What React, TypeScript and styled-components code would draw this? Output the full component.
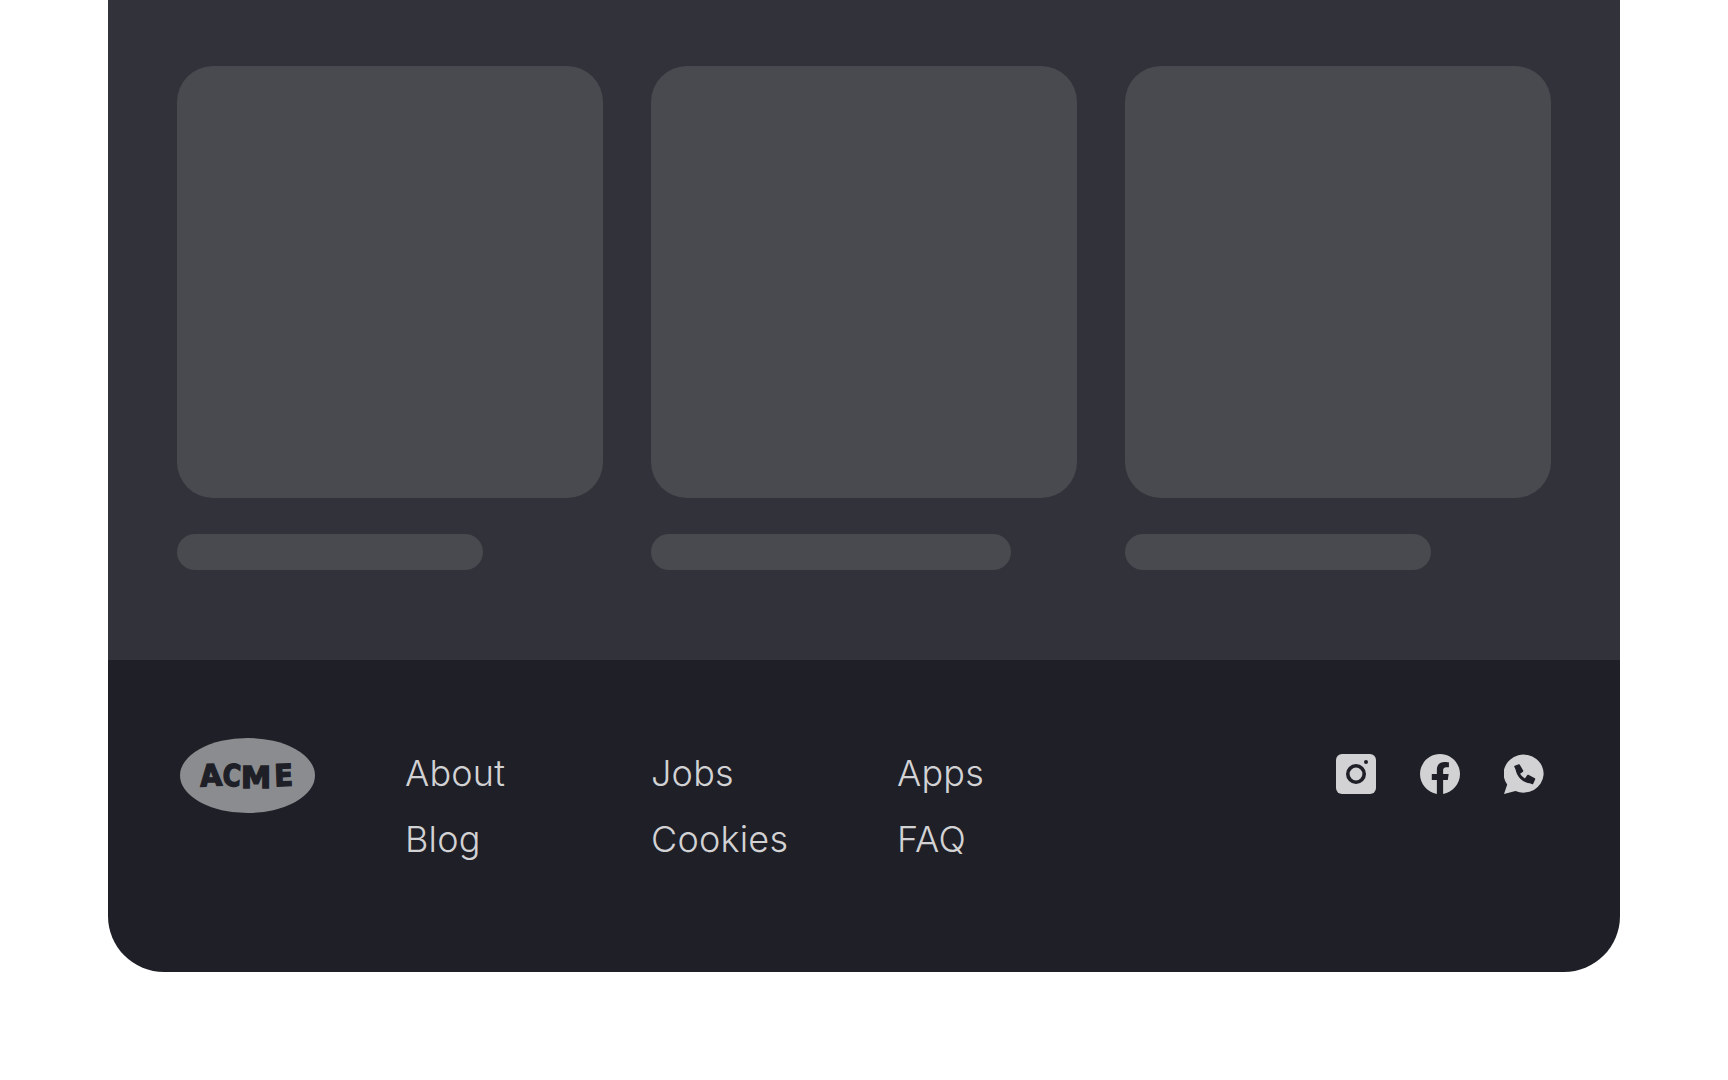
import React from "react";
import styled, { createGlobalStyle } from "styled-components";

const Global = createGlobalStyle`
  html, body { margin: 0; padding: 0; background: #fff; }
  body { font-family: Inter, "Liberation Sans", sans-serif; }
`;
const Shell = styled.div`
  width: 1512px;
  margin: 0 108px 108px;
  border-radius: 0 0 56px 56px;
  overflow: hidden;
`;
const Main = styled.main`
  display: grid;
  grid-template-columns: repeat(3, 426px);
  gap: 48px;
  padding: 66px 69px 90px;
  background: #31323a;
`;
const Card = styled.article`
  display: flex;
  flex-direction: column;
  gap: 36px;
`;
const Thumb = styled.div`
  height: 432px;
  border-radius: 36px;
  background: #494a4f;
`;
const Line = styled.div<{ $w: number }>`
  width: ${(p) => p.$w}px;
  height: 36px;
  border-radius: 18px;
  background: #494a4f;
`;
const Footer = styled.footer`
  display: flex;
  align-items: flex-start;
  height: 312px;
  box-sizing: border-box;
  padding: 78px 76px 0 72px;
  background: #1e1f27;
`;
const Logo = styled.svg`
  width: 135px;
  height: 75px;
  flex: none;
  display: block;
`;
const Links = styled.nav`
  display: grid;
  grid-template-columns: repeat(3, 246px);
  grid-auto-rows: 42px;
  row-gap: 24px;
  margin-left: 90px;
  margin-top: 14px;
`;
const LinkItem = styled.a`
  font-size: 36px;
  line-height: 42px;
  font-weight: 350;
  letter-spacing: 0.2px;
  color: #d2d2d4;
`;
const Socials = styled.div`
  display: flex;
  gap: 44px;
  margin-left: auto;
  margin-top: 16px;
`;
const Icon = styled.svg`
  width: 40px;
  height: 40px;
  display: block;
  fill: #d2d2d4;
`;
const Dark = "#1e1f27";

const LogoMark = () => (
  <Logo viewBox="0 0 135 75">
    <ellipse cx="67.5" cy="37.5" rx="67.5" ry="37.5" fill="#8b8c8f" />
    <g fontFamily="'DejaVu Sans', sans-serif" fontWeight="700" fontStretch="condensed" fontSize="30" fill={Dark} stroke={Dark} strokeWidth="1.4" textAnchor="middle">
      <text transform="translate(31.5 48) rotate(-3) scale(1.05 1)">A</text>
      <text transform="translate(51 48) rotate(4) scale(0.92 1)">C</text>
      <text transform="translate(76 50) scale(1.12 1)">M</text>
      <text transform="translate(104 48) rotate(-2)">E</text>
    </g>
  </Logo>
);

const Instagram = () => (
  <Icon viewBox="0 0 40 40">
    <rect width="40" height="40" rx="6" />
    <circle cx="20" cy="20" r="8.2" fill="none" stroke={Dark} strokeWidth="3.6" />
    <circle cx="30" cy="8" r="2" fill={Dark} />
  </Icon>
);
const Facebook = () => (
  <Icon viewBox="0 0 24 24">
    <path d="M24 12.073c0-6.627-5.373-12-12-12s-12 5.373-12 12c0 5.99 4.388 10.954 10.125 11.854v-8.385H7.078v-3.47h3.047V9.43c0-3.007 1.792-4.669 4.533-4.669 1.312 0 2.686.235 2.686.235v2.953H15.83c-1.491 0-1.956.925-1.956 1.874v2.25h3.328l-.532 3.47h-2.796v8.385C19.612 23.027 24 18.062 24 12.073z" />
  </Icon>
);
const Whatsapp = () => (
  <Icon viewBox="0 0 40 40">
    <path d="M0 40L3.2 30.5A20 19 0 1 1 11.5 37z" />
    <path fill="none" stroke={Dark} strokeWidth="3" strokeLinecap="round" d="M13 14.5C13.5 21.5 20 28 27.5 28" />
    <path fill={Dark} stroke={Dark} strokeWidth="1.6" strokeLinejoin="round" d="M11 12.5L15 11L18.5 17L15 19.5Z" />
    <path fill={Dark} stroke={Dark} strokeWidth="1.6" strokeLinejoin="round" d="M21.5 25L24 21.5L30.5 25L28.5 29.5Z" />
  </Icon>
);

const cards = [306, 360, 306];
const links = ["About", "Jobs", "Apps", "Blog", "Cookies", "FAQ"];

export default function App() {
  return (
    <>
      <Global />
      <Shell>
        <Main>
          {cards.map((w, i) => (
            <Card key={i}>
              <Thumb />
              <Line $w={w} />
            </Card>
          ))}
        </Main>
        <Footer>
          <LogoMark />
          <Links>
            {links.map((l) => (
              <LinkItem key={l}>{l}</LinkItem>
            ))}
          </Links>
          <Socials>
            <Instagram />
            <Facebook />
            <Whatsapp />
          </Socials>
        </Footer>
      </Shell>
    </>
  );
}
